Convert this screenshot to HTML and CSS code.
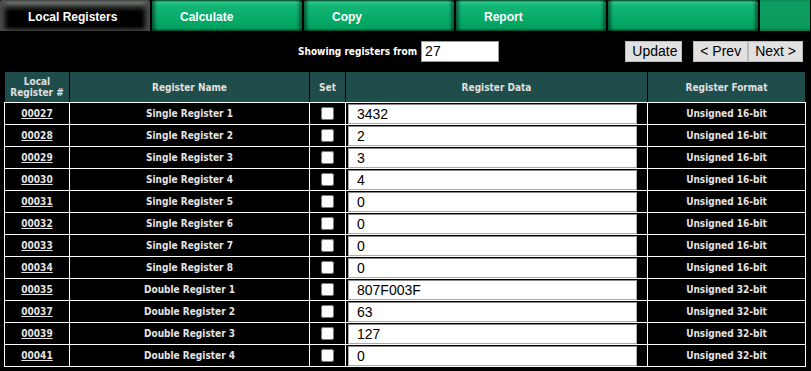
FILE: index.html
```html
<!DOCTYPE html>
<html>
<head>
    <meta charset="UTF-8">
    <title>Local Registers</title>
    <link rel="stylesheet" href="styles.css">
</head>
<body>
    <div class="tab-bar">
        <a class="tab tab-active" href="#">Local Registers</a>
        <a class="tab" href="#">Calculate</a>
        <a class="tab" href="#">Copy</a>
        <a class="tab" href="#">Report</a>
        <a class="tab" href="#"></a>
        <div class="tab-filler"></div>
    </div>

    <div class="toolbar">
        <label class="range-label" for="startReg">Showing registers from</label>
        <input class="range-input" id="startReg" type="text" value="27">
        <div class="nav-buttons">
            <button class="button update-button">Update</button>
            <button class="button">&lt; Prev</button>
            <button class="button">Next &gt;</button>
        </div>
    </div>

    <table class="register-table">
        <thead>
            <tr>
                <th class="col-num">Local<br>Register #</th>
                <th class="col-name">Register Name</th>
                <th class="col-set">Set</th>
                <th class="col-data">Register Data</th>
                <th class="col-format">Register Format</th>
            </tr>
        </thead>
        <tbody>
            <tr><td><a href="#">00027</a></td><td>Single Register 1</td><td><input type="checkbox"></td><td class="data-cell"><input class="data-input" type="text" value="3432"></td><td>Unsigned 16-bit</td></tr>
            <tr><td><a href="#">00028</a></td><td>Single Register 2</td><td><input type="checkbox"></td><td class="data-cell"><input class="data-input" type="text" value="2"></td><td>Unsigned 16-bit</td></tr>
            <tr><td><a href="#">00029</a></td><td>Single Register 3</td><td><input type="checkbox"></td><td class="data-cell"><input class="data-input" type="text" value="3"></td><td>Unsigned 16-bit</td></tr>
            <tr><td><a href="#">00030</a></td><td>Single Register 4</td><td><input type="checkbox"></td><td class="data-cell"><input class="data-input" type="text" value="4"></td><td>Unsigned 16-bit</td></tr>
            <tr><td><a href="#">00031</a></td><td>Single Register 5</td><td><input type="checkbox"></td><td class="data-cell"><input class="data-input" type="text" value="0"></td><td>Unsigned 16-bit</td></tr>
            <tr><td><a href="#">00032</a></td><td>Single Register 6</td><td><input type="checkbox"></td><td class="data-cell"><input class="data-input" type="text" value="0"></td><td>Unsigned 16-bit</td></tr>
            <tr><td><a href="#">00033</a></td><td>Single Register 7</td><td><input type="checkbox"></td><td class="data-cell"><input class="data-input" type="text" value="0"></td><td>Unsigned 16-bit</td></tr>
            <tr><td><a href="#">00034</a></td><td>Single Register 8</td><td><input type="checkbox"></td><td class="data-cell"><input class="data-input" type="text" value="0"></td><td>Unsigned 16-bit</td></tr>
            <tr><td><a href="#">00035</a></td><td>Double Register 1</td><td><input type="checkbox"></td><td class="data-cell"><input class="data-input" type="text" value="807F003F"></td><td>Unsigned 32-bit</td></tr>
            <tr><td><a href="#">00037</a></td><td>Double Register 2</td><td><input type="checkbox"></td><td class="data-cell"><input class="data-input" type="text" value="63"></td><td>Unsigned 32-bit</td></tr>
            <tr><td><a href="#">00039</a></td><td>Double Register 3</td><td><input type="checkbox"></td><td class="data-cell"><input class="data-input" type="text" value="127"></td><td>Unsigned 32-bit</td></tr>
            <tr><td><a href="#">00041</a></td><td>Double Register 4</td><td><input type="checkbox"></td><td class="data-cell"><input class="data-input" type="text" value="0"></td><td>Unsigned 32-bit</td></tr>
        </tbody>
    </table>
</body>
</html>
```

FILE: styles.css
```css
body {
    margin: 0;
    background-color: #000;
    color: #e4e4e4;
    font-family: "DejaVu Sans Condensed", "DejaVu Sans", Verdana, sans-serif;
    font-size: 10px;
    font-weight: bold;
}

/* Tab strip */
.tab-bar {
    display: flex;
    gap: 2px;
    height: 31px;
    background-color: #000;
}

.tab {
    box-sizing: border-box;
    width: 150px;
    height: 31px;
    padding: 10px 0 0 28px;
    font-family: "Liberation Sans", Arial, sans-serif;
    font-size: 12px;
    font-weight: bold;
    color: #fff;
    text-decoration: none;
    border-radius: 3px 3px 0 0;
    background: linear-gradient(#0a6d44 0, #2fd08e 2px, #14b676 5px, #07ab68 60%, #03a060 92%, #046e42 100%);
    box-shadow: inset 3px 0 3px rgba(0, 0, 0, 0.45), inset -3px 0 3px rgba(0, 0, 0, 0.45);
}

.tab-active {
    background: linear-gradient(#3a3f3a 0, #7d837d 2px, #2a2d2a 7px, #000 12px, #000 85%, #1a1a1a 100%);
    box-shadow: inset 5px 0 5px #4a4a4a, inset -5px 0 5px #4a4a4a;
}

.tab-filler {
    flex: 0 0 50px;
    background: linear-gradient(#0a8a54 0, #0c9e60 3px, #0a9a5c 90%, #06703f 100%);
}

/* Range controls */
.toolbar {
    display: flex;
    align-items: center;
    height: 40px;
    padding: 0 8px 0 298px;
}

.range-label {
    color: #fff;
    margin-right: 4px;
}

.range-input {
    box-sizing: border-box;
    width: 78px;
    height: 21px;
    padding: 0 3px;
    border: 1px solid #999;
    font-family: "Liberation Sans", Arial, sans-serif;
    font-size: 14px;
}

.nav-buttons {
    display: flex;
    margin-left: auto;
}

.button {
    box-sizing: border-box;
    height: 21px;
    padding: 0 6px;
    border: 1px solid #bbb;
    background-color: #e1e1e1;
    color: #000;
    font-family: "Liberation Sans", Arial, sans-serif;
    font-size: 14px;
}

.update-button {
    width: 57px;
    margin-right: 11px;
}

/* Register table */
.register-table {
    margin-left: 4px;
    width: 802px;
    border-collapse: collapse;
    table-layout: fixed;
}

.register-table th {
    height: 30px;
    padding: 0;
    background-color: #1e4d4b;
    color: #e0e0e0;
    font-weight: bold;
    border: 1px solid #000;
    border-bottom-color: #fff;
}

.register-table td {
    height: 21px;
    padding: 0;
    text-align: center;
    border: 1px solid #fff;
}

.register-table a {
    color: #e4e4e4;
}

.col-num { width: 64px; }
.col-name { width: 239px; }
.col-set { width: 35px; }
.col-data { width: 301px; }

.register-table input[type="checkbox"] {
    margin: 0;
    width: 13px;
    height: 13px;
    vertical-align: middle;
}

.register-table .data-cell {
    text-align: left;
    padding-left: 2px;
}

.data-input {
    box-sizing: border-box;
    width: 289px;
    height: 20px;
    margin: 0;
    padding: 0 8px;
    border: 1px solid #aaa;
    border-top-color: #888;
    font-family: "Liberation Sans", Arial, sans-serif;
    font-size: 14px;
    vertical-align: middle;
}
```
